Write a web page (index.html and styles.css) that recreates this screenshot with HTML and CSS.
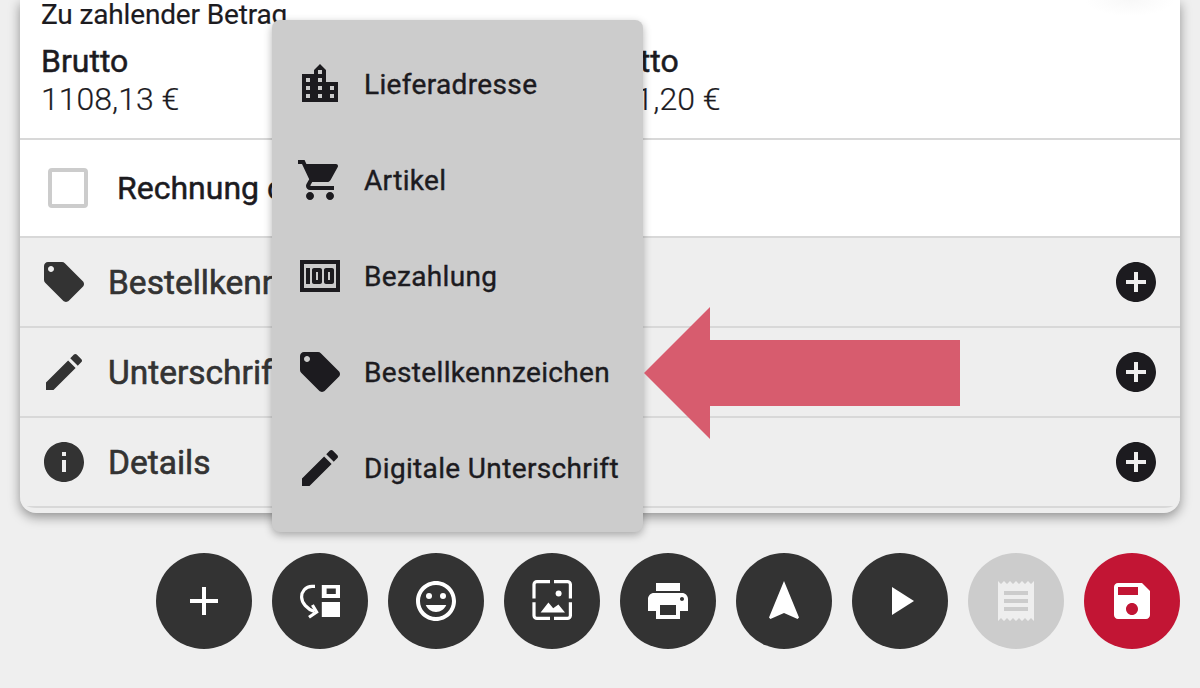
FILE: index.html
```html
<!DOCTYPE html>
<html lang="de">
<head>
  <meta charset="UTF-8">
  <meta name="viewport" content="width=device-width, initial-scale=1.0">
  <title>Bestellung</title>
  <link rel="stylesheet" href="styles.css">
</head>
<body>
  <div class="card">
    <div class="totals">
      <p class="totals-title">Zu zahlender Betrag</p>
      <div class="totals-row">
        <div class="total">
          <strong>Brutto</strong>
          <span>1108,13 €</span>
        </div>
        <div class="total">
          <strong>Netto</strong>
          <span>931,20 €</span>
        </div>
      </div>
    </div>
    <label class="invoice-row">
      <span class="checkbox"></span>
      <span>Rechnung drucken</span>
    </label>
    <div class="acc-row">
      <svg class="acc-icon" viewBox="0 0 24 24"><path d="M21.41 11.58l-9-9C12.05 2.22 11.55 2 11 2H4c-1.1 0-2 .9-2 2v7c0 .55.22 1.05.59 1.42l9 9c.36.36.86.58 1.41.58.55 0 1.05-.22 1.41-.59l7-7c.37-.36.59-.86.59-1.41 0-.55-.23-1.06-.59-1.42zM5.5 7C4.67 7 4 6.33 4 5.5S4.67 4 5.5 4 7 4.67 7 5.5 6.33 7 5.5 7z"/></svg>
      <span class="acc-label">Bestellkennzeichen</span>
      <svg class="acc-add" viewBox="0 0 24 24"><path d="M12 2C6.48 2 2 6.48 2 12s4.48 10 10 10 10-4.48 10-10S17.52 2 12 2zm5 11h-4v4h-2v-4H7v-2h4V7h2v4h4v2z"/></svg>
    </div>
    <div class="acc-row">
      <svg class="acc-icon" viewBox="0 0 24 24"><path d="M3 17.25V21h3.75L17.81 9.94l-3.75-3.75L3 17.25zM20.71 7.04c.39-.39.39-1.02 0-1.41l-2.34-2.34c-.39-.39-1.02-.39-1.41 0l-1.83 1.83 3.75 3.75 1.83-1.83z"/></svg>
      <span class="acc-label">Unterschrift</span>
      <svg class="acc-add" viewBox="0 0 24 24"><path d="M12 2C6.48 2 2 6.48 2 12s4.48 10 10 10 10-4.48 10-10S17.52 2 12 2zm5 11h-4v4h-2v-4H7v-2h4V7h2v4h4v2z"/></svg>
    </div>
    <div class="acc-row">
      <svg class="acc-icon" viewBox="0 0 24 24"><path d="M12 2C6.48 2 2 6.48 2 12s4.48 10 10 10 10-4.48 10-10S17.52 2 12 2zm1 15h-2v-6h2v6zm0-8h-2V7h2v2z"/></svg>
      <span class="acc-label">Details</span>
      <svg class="acc-add" viewBox="0 0 24 24"><path d="M12 2C6.48 2 2 6.48 2 12s4.48 10 10 10 10-4.48 10-10S17.52 2 12 2zm5 11h-4v4h-2v-4H7v-2h4V7h2v4h4v2z"/></svg>
    </div>
  </div>
  <div class="top-glow"></div>

  <div class="actions">
    <button class="fab"><svg viewBox="0 0 24 24"><path d="M19 13h-6v6h-2v-6H5v-2h6V5h2v6h6v2z"/></svg></button>
    <button class="fab"><svg viewBox="0 0 24 24"><path fill-rule="evenodd" d="M12.9 4H22v6.5h-9.1zM15.3 5.7v2.8h4.6V5.7z"/><path d="M12.9 12.5H22V20h-9.1z"/><path class="line" d="M9.5 4.7H8C4.6 4.7 2.8 7.5 2.8 10c0 3 2.8 6 6.4 7.3"/><path class="line" d="M8.2 14l2.1 3.5-3.8 2.6"/></svg></button>
    <button class="fab"><svg viewBox="0 0 24 24"><path d="M11.99 2C6.47 2 2 6.47 2 12s4.47 10 9.99 10S22 17.53 22 12 17.52 2 11.99 2zM12 20c-4.42 0-8-3.58-8-8s3.58-8 8-8 8 3.58 8 8-3.58 8-8 8z"/><circle cx="8.5" cy="9.5" r="1.5"/><circle cx="15.5" cy="9.5" r="1.5"/><path d="M12 17.5c2.33 0 4.3-1.46 5.11-3.5H6.89c.8 2.04 2.78 3.5 5.11 3.5z"/></svg></button>
    <button class="fab"><svg viewBox="0 0 24 24"><path class="line" d="M11 2.3H4.5A1.5 1.5 0 0 0 3 3.8v6.9M13 2.3h6.7a1.5 1.5 0 0 1 1.5 1.5v6.9M3 12.6v6.6a1.5 1.5 0 0 0 1.5 1.5H11M21.2 12.6v6.6a1.5 1.5 0 0 1-1.5 1.5H13"/><circle cx="15.3" cy="8.2" r="1.5"/><path d="M6.3 17.7l3.9-4.9 2.4 2.8 2.6-1.9 3.3 4z"/></svg></button>
    <button class="fab"><svg viewBox="0 0 24 24"><path d="M19 8H5c-1.66 0-3 1.34-3 3v6h4v4h12v-4h4v-6c0-1.66-1.34-3-3-3zm-3 11H8v-5h8v5zm3-7c-.55 0-1-.45-1-1s.45-1 1-1 1 .45 1 1-.45 1-1 1zm-1-9H6v4h12V3z"/></svg></button>
    <button class="fab"><svg viewBox="0 0 24 24"><path d="M12 2L4.5 20.29l.71.71L12 18l6.79 3 .71-.71z"/></svg></button>
    <button class="fab"><svg viewBox="0 0 24 24"><path d="M8 5v14l11-7z"/></svg></button>
    <button class="fab fab-disabled"><svg viewBox="0 0 24 24"><path d="M18 17H6v-2h12v2zm0-4H6v-2h12v2zm0-4H6V7h12v2zM3 22l1.5-1.5L6 22l1.5-1.5L9 22l1.5-1.5L12 22l1.5-1.5L15 22l1.5-1.5L18 22l1.5-1.5L21 22V2l-1.5 1.5L18 2l-1.5 1.5L15 2l-1.5 1.5L12 2l-1.5 1.5L9 2 7.5 3.5 6 2 4.5 3.5 3 2v20z"/></svg></button>
    <button class="fab fab-save"><svg viewBox="0 0 24 24"><path d="M17 3H5c-1.11 0-2 .9-2 2v14c0 1.1.89 2 2 2h14c1.1 0 2-.9 2-2V7l-4-4zm-5 16c-1.66 0-3-1.34-3-3s1.34-3 3-3 3 1.34 3 3-1.34 3-3 3zm3-10H5V5h10v4z"/></svg></button>
  </div>

  <div class="menu">
    <div class="menu-item">
      <svg viewBox="0 0 24 24"><path d="M15 11V5l-3-3-3 3v2H3v14h18V11h-6zm-8 8H5v-2h2v2zm0-4H5v-2h2v2zm0-4H5V9h2v2zm6 8h-2v-2h2v2zm0-4h-2v-2h2v2zm0-4h-2V9h2v2zm0-4h-2V5h2v2zm6 12h-2v-2h2v2zm0-4h-2v-2h2v2z"/></svg>
      <span>Lieferadresse</span>
    </div>
    <div class="menu-item">
      <svg viewBox="0 0 24 24"><path d="M7 18c-1.1 0-1.99.9-1.99 2S5.9 22 7 22s2-.9 2-2-.9-2-2-2zM1 2v2h2l3.6 7.59-1.35 2.45c-.16.28-.25.61-.25.96 0 1.1.9 2 2 2h12v-2H7.42c-.14 0-.25-.11-.25-.25l.03-.12.9-1.63h7.45c.75 0 1.41-.41 1.75-1.03l3.58-6.47c.08-.14.12-.31.12-.48 0-.55-.45-1-1-1H5.21l-.94-2H1zm16 16c-1.1 0-1.99.9-1.99 2s.89 2 1.99 2 2-.9 2-2-.9-2-2-2z"/></svg>
      <span>Artikel</span>
    </div>
    <div class="menu-item">
      <svg viewBox="0 0 24 24"><path d="M5 8h2v8H5zm7 0H9c-.55 0-1 .45-1 1v6c0 .55.45 1 1 1h3c.55 0 1-.45 1-1V9c0-.55-.45-1-1-1zm-1 6h-1v-4h1v4zm7-6h-3c-.55 0-1 .45-1 1v6c0 .55.45 1 1 1h3c.55 0 1-.45 1-1V9c0-.55-.45-1-1-1zm-1 6h-1v-4h1v4z"/><path d="M2 4v16h20V4H2zm2 14V6h16v12H4z"/></svg>
      <span>Bezahlung</span>
    </div>
    <div class="menu-item">
      <svg viewBox="0 0 24 24"><path d="M21.41 11.58l-9-9C12.05 2.22 11.55 2 11 2H4c-1.1 0-2 .9-2 2v7c0 .55.22 1.05.59 1.42l9 9c.36.36.86.58 1.41.58.55 0 1.05-.22 1.41-.59l7-7c.37-.36.59-.86.59-1.41 0-.55-.23-1.06-.59-1.42zM5.5 7C4.67 7 4 6.33 4 5.5S4.67 4 5.5 4 7 4.67 7 5.5 6.33 7 5.5 7z"/></svg>
      <span>Bestellkennzeichen</span>
    </div>
    <div class="menu-item">
      <svg viewBox="0 0 24 24"><path d="M3 17.25V21h3.75L17.81 9.94l-3.75-3.75L3 17.25zM20.71 7.04c.39-.39.39-1.02 0-1.41l-2.34-2.34c-.39-.39-1.02-.39-1.41 0l-1.83 1.83 3.75 3.75 1.83-1.83z"/></svg>
      <span>Digitale Unterschrift</span>
    </div>
  </div>

  <svg class="arrow" viewBox="0 0 316 132"><path d="M0 66L66 0v33h250v66H66v33z"/></svg>
</body>
</html>
```

FILE: styles.css
```css
* {
  margin: 0;
  padding: 0;
  box-sizing: border-box;
}
html, body {
  height: 100%;
  overflow: hidden;
}
body {
  font-family: Roboto, "Liberation Sans", sans-serif;
  background-color: #efefef;
  color: #1c1b1f;
  position: relative;
}

/* card with the totals and the accordion rows */
.card {
  margin: 0 20px;
  height: 513px;
  background: #eeeeee;
  border-radius: 0 0 16px 16px;
  box-shadow: 0 4px 12px rgba(0, 0, 0, 0.4);
  overflow: hidden;
  border-bottom: 5px solid #eeeeee;
}
.totals {
  height: 140px;
  background: #fff;
  border-bottom: 2px solid #d8d8d8;
  padding: 0 21px;
}
.totals-title {
  font-size: 28px;
  line-height: 30px;
  letter-spacing: -0.15px;
  -webkit-text-stroke: 0.2px;
}
.totals-row {
  display: flex;
  margin-top: 13px;
}
.total {
  width: 560px;
  display: flex;
  flex-direction: column;
}
.total strong {
  font-size: 32px;
  font-weight: 400;
  line-height: 36px;
  -webkit-text-stroke: 0.5px;
}
.total span {
  font-size: 32px;
  font-weight: 300;
  line-height: 40px;
  -webkit-text-stroke: 0.2px;
}
.invoice-row {
  height: 98px;
  background: #fff;
  display: flex;
  align-items: center;
  gap: 29px;
  padding-left: 28px;
  font-size: 32px;
  font-weight: 400;
  -webkit-text-stroke: 0.5px;
  border-bottom: 2px solid #d8d8d8;
}
.checkbox {
  width: 40px;
  height: 40px;
  border: 4px solid #cccccc;
  border-radius: 4px;
}
.acc-row {
  height: 90px;
  display: flex;
  align-items: center;
  padding: 0 20px;
  border-bottom: 2px solid #d8d8d8;
  color: #333333;
}
.acc-icon {
  width: 48px;
  height: 48px;
  fill: #333333;
}
.acc-label {
  margin-left: 20px;
  font-size: 33.5px;
  font-weight: 400;
  -webkit-text-stroke: 0.6px;
  flex: 1;
}
.acc-add {
  width: 48px;
  height: 48px;
  fill: #1c1b1f;
}

/* soft shadow of a button scrolled out above the card */
.top-glow {
  position: absolute;
  left: 1085px;
  top: -16px;
  width: 90px;
  height: 32px;
  border-radius: 50%;
  background: radial-gradient(closest-side, #f8f8f8, #ffffff);
}

/* round action buttons */
.actions {
  display: flex;
  justify-content: flex-end;
  gap: 20px;
  padding: 40px 20px 0;
}
.fab {
  width: 96px;
  height: 96px;
  border: none;
  border-radius: 50%;
  background: #333333;
  display: flex;
  align-items: center;
  justify-content: center;
}
.fab svg {
  width: 48px;
  height: 48px;
  fill: #fff;
}
.fab .line {
  fill: none;
  stroke: #fff;
  stroke-width: 1.6;
}
.fab-disabled {
  background: #cccccc;
}
.fab-disabled svg {
  fill: #eeeeee;
}
.fab-save {
  background: #c21534;
}

/* popup menu over the card */
.menu {
  position: absolute;
  left: 272px;
  top: 20px;
  width: 371px;
  height: 512px;
  padding: 16px 0;
  background: #cccccc;
  border-radius: 8px;
  box-shadow: 0 3px 8px rgba(0, 0, 0, 0.3);
}
.menu-item {
  height: 96px;
  display: flex;
  align-items: center;
  gap: 20px;
  padding-left: 24px;
  font-size: 28px;
  font-weight: 400;
  letter-spacing: 0.35px;
  -webkit-text-stroke: 0.4px;
}
.menu-item svg {
  width: 48px;
  height: 48px;
  fill: #1c1b1f;
}

/* red hint arrow */
.arrow {
  position: absolute;
  left: 644px;
  top: 307px;
  width: 316px;
  height: 132px;
  fill: #d75c6e;
}
```
